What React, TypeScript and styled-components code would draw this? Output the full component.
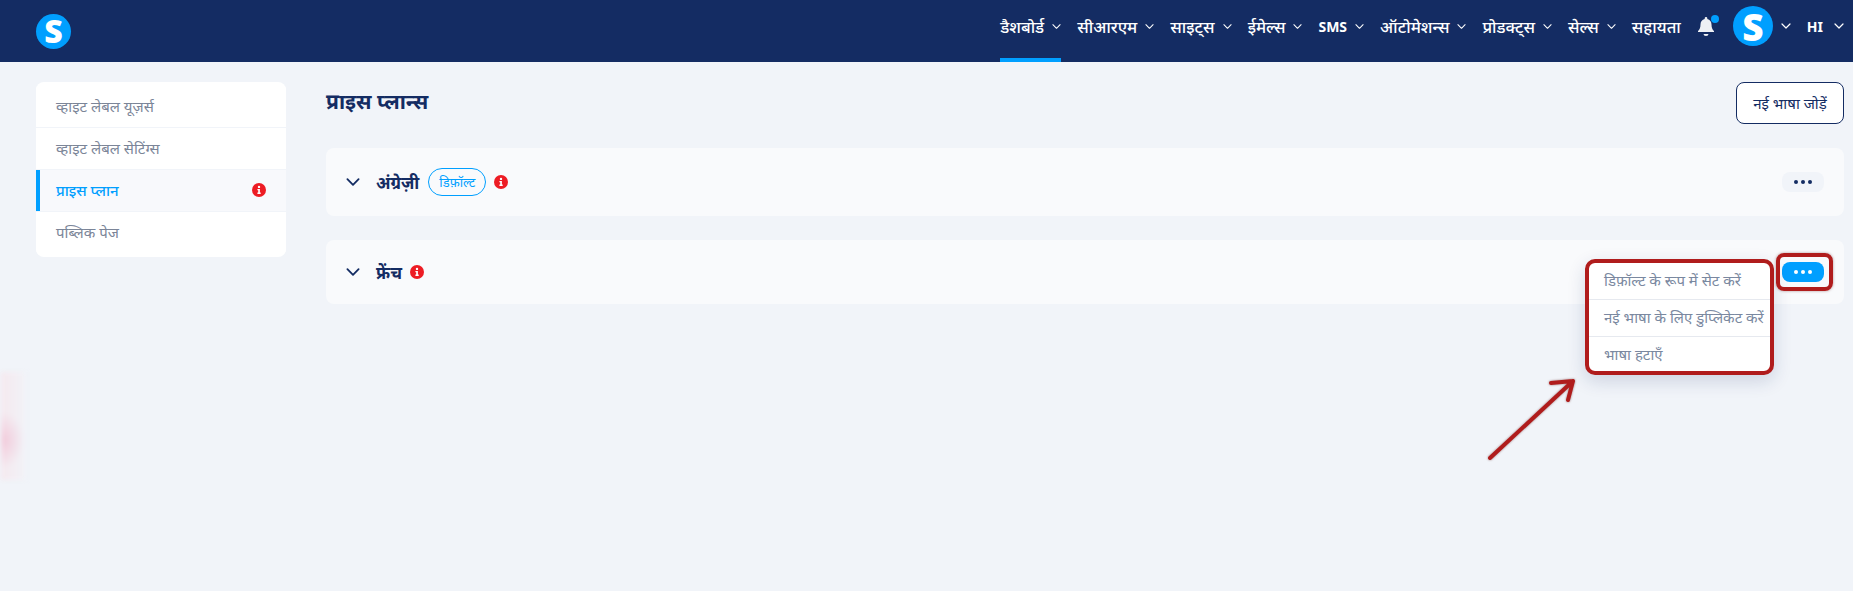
import React from "react";
import styled, { createGlobalStyle } from "styled-components";

const Global = createGlobalStyle`
  html, body { margin: 0; padding: 0; background: #f1f4f9; }
  body { font-family: "Noto Sans", "Noto Sans Devanagari", "Lohit Devanagari", "Inter", "Liberation Sans", sans-serif; width: 1853px; height: 591px; overflow: hidden; }
  * { box-sizing: border-box; }
`;

const Page = styled.div`
  position: relative;
  width: 1853px;
  height: 591px;
  background: #f1f4f9;
  overflow: hidden;
`;
const Header = styled.header`
  height: 62px;
  background: #142c63;
  display: flex;
  align-items: center;
  padding: 0 9px 0 36px;
`;
const Logo = styled.div<{ $size: number }>`
  width: ${(p) => p.$size}px;
  height: ${(p) => p.$size}px;
  border-radius: 50%;
  background: #009fff;
  color: #fff;
  display: flex;
  align-items: center;
  justify-content: center;
  font: 800 ${(p) => Math.round(p.$size * 0.92)}px/1 "Open Sans", sans-serif;
  flex: none;
`;
const Nav = styled.nav`
  margin-left: auto;
  display: flex;
  align-items: center;
  height: 62px;
  gap: 16px;
`;
const NavItem = styled.div<{ $active?: boolean; $latin?: boolean; $gap?: number }>`
  position: relative;
  height: 62px;
  display: flex;
  align-items: center;
  gap: ${(p) => p.$gap ?? 8}px;
  color: #fff;
  font-size: ${(p) => (p.$latin ? "14px" : "16.6px")};
  font-weight: ${(p) => (p.$latin ? 700 : 500)};
  padding-bottom: 10px;
  box-shadow: ${(p) => (p.$active ? "inset 0 -4px 0 #009fff" : "none")};
`;
const BellWrap = styled.div`
  position: relative;
  width: 18px;
  height: 21px;
  margin: 0 2px 10px 0;
  display: flex;
`;
const BellDot = styled.span`
  position: absolute;
  top: -1px;
  right: -4px;
  width: 8px;
  height: 8px;
  border-radius: 50%;
  background: #009fff;
`;
const Profile = styled.div`
  display: flex;
  align-items: center;
  gap: 8px;
  margin-bottom: 10px;
`;
const Body = styled.div`
  display: flex;
  align-items: flex-start;
  padding: 20px 9px 0 36px;
  gap: 40px;
`;
const Sidebar = styled.aside`
  width: 250px;
  flex: none;
  background: #fff;
  border-radius: 8px;
  overflow: hidden;
  padding: 4px 0 3px;
`;
const SideRow = styled.div<{ $active?: boolean }>`
  height: 42px;
  display: flex;
  align-items: center;
  justify-content: space-between;
  padding: 0 20px 2px;
  font-size: 15px;
  color: ${(p) => (p.$active ? "#009fff" : "#7b8598")};
  font-weight: ${(p) => (p.$active ? 500 : 400)};
  background: ${(p) => (p.$active ? "#f8f9fc" : "#fff")};
  border-bottom: 1px solid #f1f4f9;
  box-shadow: ${(p) => (p.$active ? "inset 4px 0 0 #009fff" : "none")};
  &:last-child { border-bottom: none; }
`;
const Main = styled.main`
  flex: 1;
  min-width: 0;
`;
const TitleRow = styled.div`
  display: flex;
  align-items: flex-start;
  justify-content: space-between;
  height: 66px;
`;
const Title = styled.h1`
  margin: -1px 0 0;
  font-size: 21px;
  line-height: 40px;
  font-weight: 700;
  color: #142c63;
`;
const AddButton = styled.button`
  width: 108px;
  height: 42px;
  background: #fff;
  border: 1px solid #142c63;
  border-radius: 8px;
  color: #142c63;
  font: 400 15px "Noto Sans", sans-serif;
  padding: 0;
`;
const Card = styled.section<{ $h: number }>`
  height: ${(p) => p.$h}px;
  background: #f9fafc;
  border-radius: 8px;
  display: flex;
  align-items: center;
  padding: 0 20px;
  margin-bottom: 24px;
`;
const CardName = styled.span`
  font-size: 17px;
  font-weight: 700;
  color: #142c63;
  margin: 0 8px 0 16px;
`;
const Badge = styled.span`
  height: 28px;
  padding: 0 10px;
  display: flex;
  align-items: center;
  border: 1px solid #009fff;
  border-radius: 14px;
  color: #009fff;
  font-size: 13px;
  margin: 0 8px 0 1px;
`;
const DotsButton = styled.div<{ $on?: boolean }>`
  margin-left: auto;
  width: 42px;
  height: 20px;
  border-radius: 8px;
  background: ${(p) => (p.$on ? "#009fff" : "#f1f4f9")};
  display: flex;
  align-items: center;
  justify-content: center;
  gap: 3px;
  & i {
    width: 4px;
    height: 4px;
    border-radius: 50%;
    background: ${(p) => (p.$on ? "#fff" : "#142c63")};
  }
`;
const Menu = styled.div`
  position: absolute;
  left: 1585px;
  top: 259px;
  width: 189px;
  height: 116px;
  background: #fff;
  border: 4px solid #b01c1c;
  border-radius: 10px;
  box-shadow: 0 6px 18px rgba(20, 44, 99, 0.16);
  overflow: hidden;
`;
const MenuItem = styled.div<{ $h: number }>`
  height: ${(p) => p.$h}px;
  display: flex;
  align-items: center;
  padding: 0 0 2px 15px;
  font-size: 15px;
  color: #7a88a0;
  white-space: nowrap;
  border-bottom: 1px solid #e6e9ef;
  &:last-child { border-bottom: none; padding-bottom: 0; }
`;
const Highlight = styled.div`
  position: absolute;
  left: 1776px;
  top: 253px;
  width: 57px;
  height: 38px;
  border: 4px solid #b01c1c;
  border-radius: 8px;
  box-shadow: 0 0 3px rgba(80, 0, 0, 0.4);
`;
const ArrowSvg = styled.svg`
  position: absolute;
  left: 1480px;
  top: 370px;
  filter: drop-shadow(0 0 1px rgba(80, 0, 0, 0.5));
`;
const Smear = styled.div`
  position: absolute;
  left: 1px;
  top: 372px;
  width: 25px;
  height: 108px;
  filter: blur(2px);
  background: radial-gradient(ellipse 20px 28px at 3px 68px, rgba(240, 175, 200, 0.5), rgba(245, 225, 235, 0) 100%),
    linear-gradient(90deg, #f5e9ef, #f1f2f7);
`;

const Chevron = ({ size = 9, color = "#fff", sw = 1.2 }: { size?: number; color?: string; sw?: number }) => (
  <svg width={size} height={size} viewBox="0 0 10 10" fill="none" style={{ flex: "none" }}>
    <path d="M1 3l4 4 4-4" stroke={color} strokeWidth={sw} strokeLinecap="round" strokeLinejoin="round" />
  </svg>
);
const Info = () => (
  <svg width="14" height="14" viewBox="0 0 14 14" style={{ flex: "none" }}>
    <circle cx="7" cy="7" r="7" fill="#ed1c24" />
    <circle cx="7" cy="3.9" r="1.2" fill="#fff" />
    <path d="M5.4 6h2.5v3.6h.8V11H5.4V9.6h.8V7.3h-.8z" fill="#fff" />
  </svg>
);
const Bell = () => (
  <svg width="18" height="21" viewBox="0 0 18 21">
    <path d="M9 1a1.3 1.3 0 0 1 1.3 1.3v.6c2.7.6 4.2 2.8 4.2 5.5 0 3.6 1 5 2.5 6.6v1H1v-1c1.5-1.6 2.5-3 2.5-6.6 0-2.7 1.5-4.9 4.2-5.5v-.6A1.3 1.3 0 0 1 9 1z" fill="#eef0f4" />
    <path d="M6.5 18h5a2.5 2 0 0 1-5 0z" fill="#eef0f4" />
  </svg>
);
const Dots = () => (<><i /><i /><i /></>);

const nav = ["डैशबोर्ड", "सीआरएम", "साइट्स", "ईमेल्स", "SMS", "ऑटोमेशन्स", "प्रोडक्ट्स", "सेल्स"];

export default function App() {
  return (
    <Page>
      <Global />
      <Header>
        <Logo $size={35}>S</Logo>
        <Nav>
          {nav.map((n, i) => (
            <NavItem key={n} $active={i === 0} $latin={n === "SMS"}>
              {n}
              <Chevron />
            </NavItem>
          ))}
          <NavItem>सहायता</NavItem>
          <BellWrap>
            <Bell />
            <BellDot />
          </BellWrap>
          <Profile>
            <Logo $size={40}>S</Logo>
            <Chevron size={10} />
          </Profile>
          <NavItem $latin $gap={11}>
            HI
            <Chevron size={10} />
          </NavItem>
        </Nav>
      </Header>
      <Body>
        <Sidebar>
          <SideRow>व्हाइट लेबल यूज़र्स</SideRow>
          <SideRow>व्हाइट लेबल सेटिंग्स</SideRow>
          <SideRow $active>
            प्राइस प्लान
            <Info />
          </SideRow>
          <SideRow>पब्लिक पेज</SideRow>
        </Sidebar>
        <Main>
          <TitleRow>
            <Title>प्राइस प्लान्स</Title>
            <AddButton>नई भाषा जोड़ें</AddButton>
          </TitleRow>
          <Card $h={68}>
            <Chevron size={14} color="#142c63" sw={1.3} />
            <CardName>अंग्रेज़ी</CardName>
            <Badge>डिफ़ॉल्ट</Badge>
            <Info />
            <DotsButton><Dots /></DotsButton>
          </Card>
          <Card $h={64}>
            <Chevron size={14} color="#142c63" sw={1.3} />
            <CardName>फ्रेंच</CardName>
            <Info />
            <DotsButton $on><Dots /></DotsButton>
          </Card>
        </Main>
      </Body>
      <Menu>
        <MenuItem $h={37}>डिफ़ॉल्ट के रूप में सेट करें</MenuItem>
        <MenuItem $h={37}>नई भाषा के लिए डुप्लिकेट करें</MenuItem>
        <MenuItem $h={34}>भाषा हटाएँ</MenuItem>
      </Menu>
      <Highlight />
      <ArrowSvg width="100" height="95" viewBox="0 0 100 95" fill="none">
        <path d="M10 88 L93 11 M71 13 L93 11 L88 30" stroke="#b01c1c" strokeWidth="4" strokeLinecap="round" strokeLinejoin="round" />
      </ArrowSvg>
      <Smear />
    </Page>
  );
}
